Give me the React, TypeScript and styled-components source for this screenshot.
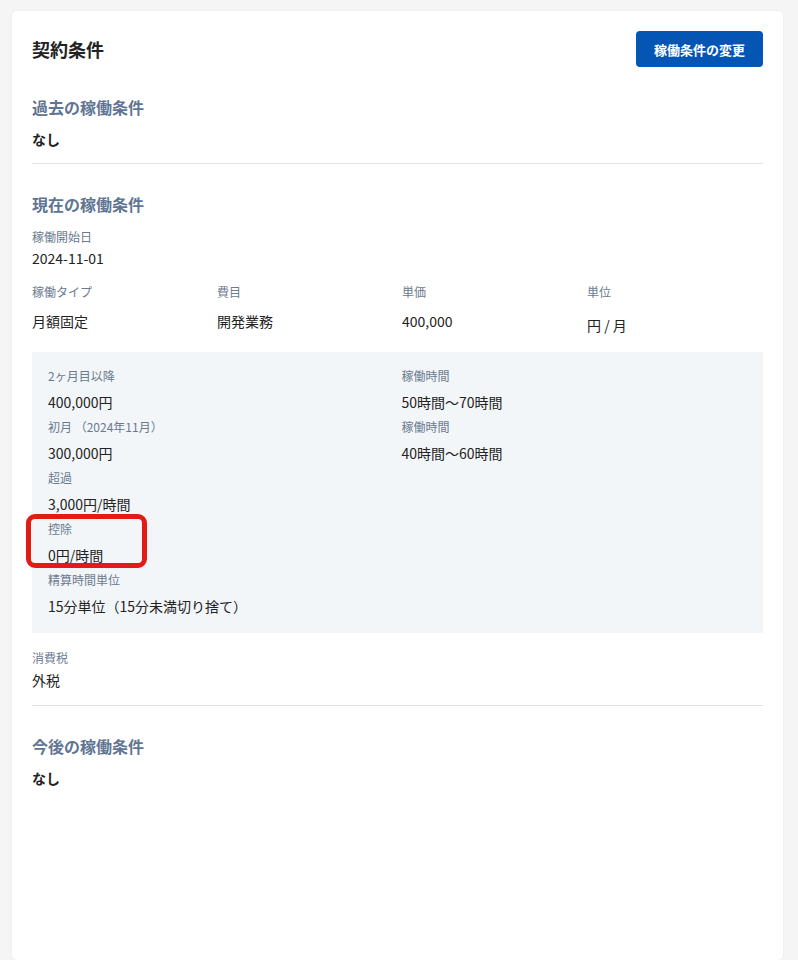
import React from "react";
import styled, { createGlobalStyle, css } from "styled-components";

const GlobalStyle = createGlobalStyle`
  html, body {
    margin: 0;
    padding: 0;
    background: #f5f5f5;
    font-family: "Noto Sans CJK JP", "Noto Sans", sans-serif;
    color: #222;
  }
`;

const Page = styled.div`
  padding: 11px 15px 0 12px;
  min-height: 960px;
  box-sizing: border-box;
  display: flex;
`;

const Card = styled.div`
  flex: 1;
  background: #fff;
  border-radius: 5px;
  box-shadow: 0 0 3px rgba(0, 0, 0, 0.05);
  padding: 20px 20px 0 20px;
  min-height: 949px;
  box-sizing: border-box;
`;

const Header = styled.div`
  display: flex;
  justify-content: space-between;
  align-items: center;
  height: 36px;
`;

const Title = styled.h1`
  margin: 0;
  font-size: 18px;
  font-weight: 700;
  color: #222;
`;

const Button = styled.button`
  height: 36px;
  padding: 0 18px;
  border: none;
  border-radius: 4px;
  background: #0455b4;
  color: #fff;
  font-family: inherit;
  font-size: 13px;
  font-weight: 700;
`;

const Section = styled.section<{ $last?: boolean }>`
  padding: 28px 0 14px;
  ${(p) =>
    !p.$last &&
    css`
      border-bottom: 1px solid #e2e2e2;
    `}
`;

const SectionTitle = styled.h2`
  margin: 0;
  font-size: 16px;
  line-height: 24px;
  font-weight: 700;
  color: #5f7593;
`;

const Empty = styled.div`
  margin-top: 10px;
  font-size: 14px;
  line-height: 20px;
  font-weight: 700;
  color: #222;
`;

const Label = styled.div`
  font-size: 12px;
  line-height: 18px;
  color: #6a7a8f;
`;

const Value = styled.div<{ $drop?: number }>`
  font-size: 14px;
  line-height: 22px;
  color: #222;
  margin-top: ${(p) => p.$drop ?? 1}px;
`;

const Field = styled.div<{ $top?: number; $mark?: boolean }>`
  position: relative;
  margin-top: ${(p) => p.$top ?? 0}px;
  ${(p) =>
    p.$mark &&
    css`
      &::after {
        content: "";
        position: absolute;
        top: -6px;
        left: -22px;
        width: 121px;
        bottom: -2px;
        box-sizing: border-box;
        border: 5px solid #e21c14;
        border-radius: 9px;
        pointer-events: none;
      }
    `}
`;

const FourCols = styled.div`
  display: grid;
  grid-template-columns: repeat(4, 1fr);
  column-gap: 9px;
  margin-top: 14px;
`;

const Detail = styled.div`
  margin-top: 16px;
  background: #f3f6f9;
  padding: 15px 16px 16px;
  display: grid;
  grid-template-columns: 1fr 1fr;
  column-gap: 8px;
  row-gap: 5px;
`;

const FootField = styled.div`
  margin-top: 16px;
`;

type Pair = { label: string; value: string; mark?: boolean };

const rows: Pair[][] = [
  [
    { label: "2ヶ月目以降", value: "400,000円" },
    { label: "稼働時間", value: "50時間〜70時間" },
  ],
  [
    { label: "初月 （2024年11月）", value: "300,000円" },
    { label: "稼働時間", value: "40時間〜60時間" },
  ],
  [{ label: "超過", value: "3,000円/時間" }],
  [{ label: "控除", value: "0円/時間", mark: true }],
  [{ label: "精算時間単位", value: "15分単位（15分未満切り捨て）" }],
];

const App = () => {
  return (
    <Page>
      <GlobalStyle />
      <Card>
        <Header>
          <Title>契約条件</Title>
          <Button>稼働条件の変更</Button>
        </Header>

        <Section>
          <SectionTitle>過去の稼働条件</SectionTitle>
          <Empty>なし</Empty>
        </Section>

        <Section>
          <SectionTitle>現在の稼働条件</SectionTitle>
          <Field $top={12}>
            <Label>稼働開始日</Label>
            <Value>2024-11-01</Value>
          </Field>
          <FourCols>
            <Field>
              <Label>稼働タイプ</Label>
              <Value $drop={9}>月額固定</Value>
            </Field>
            <Field>
              <Label>費目</Label>
              <Value $drop={9}>開発業務</Value>
            </Field>
            <Field>
              <Label>単価</Label>
              <Value $drop={9}>400,000</Value>
            </Field>
            <Field>
              <Label>単位</Label>
              <Value $drop={13}>円 / 月</Value>
            </Field>
          </FourCols>

          <Detail>
            {rows.map((row, i) => (
              <React.Fragment key={i}>
                {row.map((f, j) => (
                  <Field key={j} $mark={f.mark}>
                    <Label>{f.label}</Label>
                    <Value $drop={6}>{f.value}</Value>
                  </Field>
                ))}
                {row.length === 1 && <div />}
              </React.Fragment>
            ))}
          </Detail>

          <FootField>
            <Label>消費税</Label>
            <Value $drop={2}>外税</Value>
          </FootField>
        </Section>

        <Section $last>
          <SectionTitle>今後の稼働条件</SectionTitle>
          <Empty>なし</Empty>
        </Section>
      </Card>
    </Page>
  );
};

export default App;
